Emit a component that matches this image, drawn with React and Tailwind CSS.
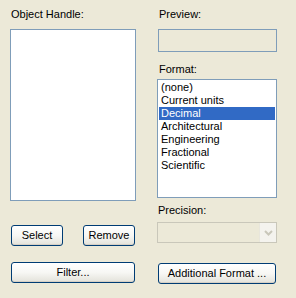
const formats = ['(none)', 'Current units', 'Decimal', 'Architectural', 'Engineering', 'Fractional', 'Scientific']

function XpButton({ children, className = '' }) {
  return (
    <button
      className={`h-[21px] rounded-[3px] border border-[#003c74] bg-gradient-to-b from-[#ffffff] via-[#f7f7f4] to-[#e3e2da] text-[11px] leading-none text-black shadow-[inset_0_-1px_0_#d6d0c5] ${className}`}
    >
      {children}
    </button>
  )
}

export default function App() {
  return (
    <div
      className="w-[296px] h-[298px] bg-[#ece9d8] flex gap-[21px] pl-[10px] pt-[8px] text-[11px] text-black"
      style={{ fontFamily: '"Liberation Sans", Arial, sans-serif' }}
    >
      <div className="w-[126px] flex flex-col">
        <div className="h-[13px] leading-[13px] pl-px">Object Handle:</div>
        <div className="mt-[8px] h-[172px] border border-[#7f9db9] bg-white" />
        <div className="mt-[24px] flex justify-between px-px">
          <XpButton className="w-[52px]">Select</XpButton>
          <XpButton className="w-[52px]">Remove</XpButton>
        </div>
        <div className="mt-[16px] px-px">
          <XpButton className="w-full">Filter...</XpButton>
        </div>
      </div>

      <div className="w-[120px] flex flex-col">
        <div className="h-[13px] leading-[13px] pl-[2px]">Preview:</div>
        <div className="mt-[8px] ml-px h-[23px] border border-[#7f9db9] bg-[#ece9d8]" />
        <div className="mt-[11px] h-[13px] leading-[13px] pl-[2px]">Format:</div>
        <div className="mt-[3px] h-[119px] border border-[#7f9db9] bg-white pt-px">
          {formats.map((f) => (
            <div
              key={f}
              className={`mx-px h-[13px] leading-[13px] pl-[2px] whitespace-nowrap ${
                f === 'Decimal' ? 'bg-[#316ac5] text-white' : ''
              }`}
            >
              {f}
            </div>
          ))}
        </div>
        <div className="mt-[6px] h-[13px] leading-[13px] pl-px">Precision:</div>
        <div className="mt-[5px] h-[21px] border border-[#c9c7ba] bg-[#ece9d8] flex justify-end">
          <div className="w-[17px] h-full bg-[#f4f3ee] border-l border-[#e8e6dc] flex items-center justify-center">
            <svg width="9" height="6" viewBox="0 0 9 6">
              <path d="M1 1 L4.5 4.5 L8 1" fill="none" stroke="#c9c7ba" strokeWidth="2" />
            </svg>
          </div>
        </div>
        <div className="mt-[20px] pl-px pr-px">
          <XpButton className="w-full">Additional Format ...</XpButton>
        </div>
      </div>
    </div>
  )
}
